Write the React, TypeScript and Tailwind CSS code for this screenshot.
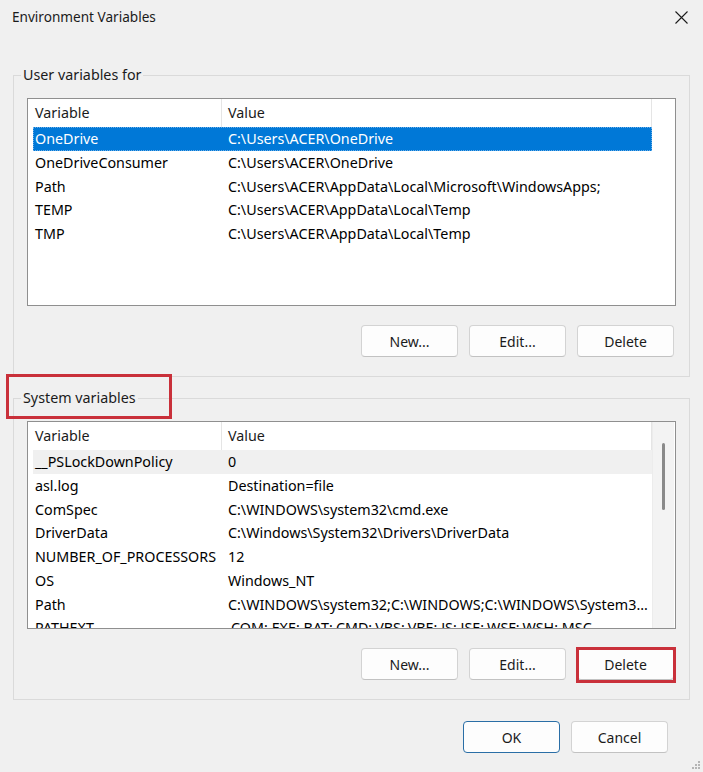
import type { JSX } from 'react';

interface EnvVar {
  name: string;
  value: string;
}

const USER_VARS: EnvVar[] = [
  { name: 'OneDrive', value: 'C:\\Users\\ACER\\OneDrive' },
  { name: 'OneDriveConsumer', value: 'C:\\Users\\ACER\\OneDrive' },
  { name: 'Path', value: 'C:\\Users\\ACER\\AppData\\Local\\Microsoft\\WindowsApps;' },
  { name: 'TEMP', value: 'C:\\Users\\ACER\\AppData\\Local\\Temp' },
  { name: 'TMP', value: 'C:\\Users\\ACER\\AppData\\Local\\Temp' },
];

const SYSTEM_VARS: EnvVar[] = [
  { name: '__PSLockDownPolicy', value: '0' },
  { name: 'asl.log', value: 'Destination=file' },
  { name: 'ComSpec', value: 'C:\\WINDOWS\\system32\\cmd.exe' },
  { name: 'DriverData', value: 'C:\\Windows\\System32\\Drivers\\DriverData' },
  { name: 'NUMBER_OF_PROCESSORS', value: '12' },
  { name: 'OS', value: 'Windows_NT' },
  { name: 'Path', value: 'C:\\WINDOWS\\system32;C:\\WINDOWS;C:\\WINDOWS\\System3...' },
  { name: 'PATHEXT', value: '.COM;.EXE;.BAT;.CMD;.VBS;.VBE;.JS;.JSE;.WSF;.WSH;.MSC' },
];

function DialogButton({ label, primary = false }: { label: string; primary?: boolean }): JSX.Element {
  return (
    <button
      type="button"
      className={
        primary
          ? 'h-[32px] w-[97px] rounded-[4px] border border-[#2a6ea6] bg-[#fdfdfd] text-[14px] text-[#1b1b1b]'
          : 'h-[32px] w-[97px] rounded-[4px] border border-[#d3d3d3] border-b-[#c2c2c2] bg-[#fdfdfd] text-[14px] text-[#1b1b1b]'
      }
    >
      {label}
    </button>
  );
}

function VarList({
  rows,
  selected,
  hovered,
  scrollbar = false,
}: {
  rows: EnvVar[];
  selected?: number;
  hovered?: number;
  scrollbar?: boolean;
}): JSX.Element {
  return (
    <div className="flex h-[208px] overflow-hidden border border-[#8f8f8f] bg-white">
      <div className="w-[624px] shrink-0">
        {/* header */}
        <div className="flex h-[28px] items-center text-[14.3px] text-[#1b1b1b]">
          <div className="flex h-full w-[194px] items-center border-r border-[#e5e5e5] pl-[7px]">Variable</div>
          <div className="flex h-full w-[430px] items-center border-r border-[#e5e5e5] pl-[6px]">Value</div>
        </div>
        {rows.map((r, i) => (
          <div
            key={r.name + i}
            className={
              i === selected
                ? 'ml-[5px] flex h-[23.75px] w-[619px] items-center bg-[#0078d7] text-[14.3px] text-white outline-1 -outline-offset-1 outline-dotted outline-[#6aaee8]'
                : i === hovered
                  ? 'ml-[5px] flex h-[23.75px] w-[619px] items-center bg-[#f0f0f0] text-[14.3px] text-black'
                  : 'ml-[5px] flex h-[23.75px] w-[619px] items-center text-[14.3px] text-black'
            }
          >
            <span className="w-[188px] shrink-0 truncate pl-[2px]">{r.name}</span>
            <span className="whitespace-nowrap pl-[7px]">{r.value}</span>
          </div>
        ))}
      </div>
      {scrollbar ? (
        <div className="flex w-[22px] shrink-0 justify-center border-l border-[#ececec] bg-[#f3f3f3] pt-[21px]">
          <div className="h-[67px] w-[3px] rounded-full bg-[#8a8a8a]" />
        </div>
      ) : null}
    </div>
  );
}

function GroupBox({
  label,
  children,
  highlightLabel = false,
}: {
  label: string;
  children: JSX.Element[];
  highlightLabel?: boolean;
}): JSX.Element {
  return (
    <div className="relative border border-[#dadada] pb-[19px] pl-[13px] pr-[13px] pt-[22px]">
      <span className="absolute left-[7px] top-[-11px] bg-[#f0f0f0] px-[2px] text-[14.3px] leading-[20px] text-[#1b1b1b]">
        {label}
      </span>
      {highlightLabel ? (
        <div className="absolute left-[-8px] top-[-25px] h-[45px] w-[166px] border-[3px] border-[#c9303a]" />
      ) : null}
      {children}
    </div>
  );
}

export default function App(): JSX.Element {
  return (
    <div className="relative h-[772px] w-[703px] overflow-hidden bg-[#f0f0f0] font-['Noto_Sans','Open_Sans',sans-serif] text-[#1b1b1b]">
      {/* title bar */}
      <div className="flex h-[34px] items-center justify-between pl-[12px] pr-[15px]">
        <span className="text-[13.6px]">Environment Variables</span>
        <svg width="13" height="13" viewBox="0 0 13 13" className="text-[#1b1b1b]">
          <path d="M0.5 0.5 L12.5 12.5 M12.5 0.5 L0.5 12.5" stroke="currentColor" strokeWidth="1.1" fill="none" />
        </svg>
      </div>

      <div className="px-[13px] pt-[41px]">
        <GroupBox label="User variables for">
          <VarList rows={USER_VARS} selected={0} />
          <div className="mr-[2px] mt-[19px] flex justify-end gap-[11px]">
            <DialogButton label="New..." />
            <DialogButton label="Edit..." />
            <DialogButton label="Delete" />
          </div>
        </GroupBox>

        <div className="mt-[21px]">
          <GroupBox label="System variables" highlightLabel>
            <VarList rows={SYSTEM_VARS} hovered={0} scrollbar />
            <div className="mr-[2px] mt-[19px] flex justify-end gap-[11px]">
              <DialogButton label="New..." />
              <DialogButton label="Edit..." />
              <div className="relative">
                <DialogButton label="Delete" />
                <div className="absolute left-[-1px] top-[-1px] h-[36px] w-[100px] border-[3px] border-[#c9303a]" />
              </div>
            </div>
          </GroupBox>
        </div>
      </div>

      {/* footer */}
      <div className="mt-[21px] flex justify-end gap-[11px] pr-[35px]">
        <DialogButton label="OK" primary />
        <DialogButton label="Cancel" />
      </div>

      {/* resize grip */}
      <svg width="10" height="10" viewBox="0 0 10 10" className="absolute bottom-[2px] right-[2px]">
        <g fill="#b5b5b5">
          <rect x="7" y="1" width="2" height="2" />
          <rect x="4" y="4" width="2" height="2" />
          <rect x="7" y="4" width="2" height="2" />
          <rect x="1" y="7" width="2" height="2" />
          <rect x="4" y="7" width="2" height="2" />
          <rect x="7" y="7" width="2" height="2" />
        </g>
      </svg>
    </div>
  );
}
